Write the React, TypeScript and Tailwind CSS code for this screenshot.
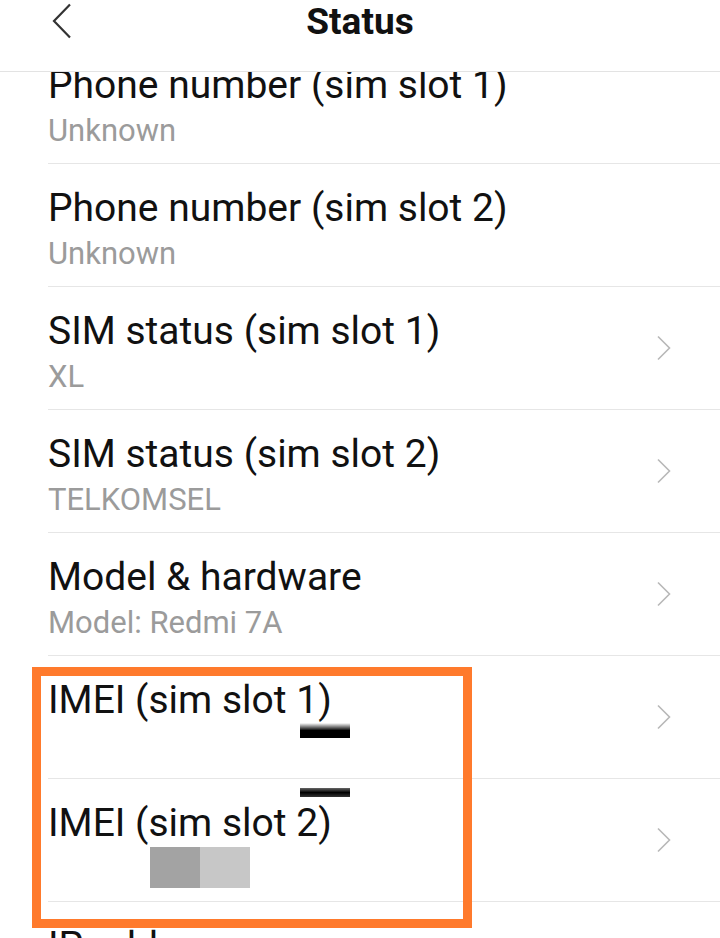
import React from 'react';

type Item = { title: string; value?: string; chevron?: boolean };

const ITEMS: Item[] = [
  { title: 'Phone number (sim slot 1)', value: 'Unknown' },
  { title: 'Phone number (sim slot 2)', value: 'Unknown' },
  { title: 'SIM status (sim slot 1)', value: 'XL', chevron: true },
  { title: 'SIM status (sim slot 2)', value: 'TELKOMSEL', chevron: true },
  { title: 'Model & hardware', value: 'Model: Redmi 7A', chevron: true },
  { title: 'IMEI (sim slot 1)', value: '', chevron: true },
  { title: 'IMEI (sim slot 2)', value: '', chevron: true },
  { title: 'IP address', value: '' },
];

function Chevron() {
  return (
    <svg width="16" height="26" viewBox="0 0 16 26" fill="none" className="shrink-0 self-center">
      <path d="M2 1.5 L13.5 13 L2 24.5" stroke="#b8b8b8" strokeWidth="1.6" />
    </svg>
  );
}

function Row({ item }: { item: Item }) {
  return (
    <div className="h-[123px] ml-[48px] border-b border-[#e6e6e6] flex items-start pr-[48px]">
      <div className="flex-1 pt-[21px]">
        <div className="text-[39px] leading-[46px] text-[#111]">{item.title}</div>
        <div className="mt-[3px] text-[31px] leading-[40px] text-[#9b9b9b] h-[40px]">{item.value}</div>
      </div>
      {item.chevron && <Chevron />}
    </div>
  );
}

export default function App() {
  return (
    <div className="relative w-[720px] h-[938px] overflow-hidden bg-white" style={{ fontFamily: 'Roboto, "Noto Sans", sans-serif' }}>
      {/* Header */}
      <div className="relative z-10 h-[72px] bg-white border-b border-[#e3e3e3] flex items-start justify-center">
        <svg width="22" height="36" viewBox="0 0 22 36" fill="none" className="absolute left-[51px] top-[3px]">
          <path d="M19 1.5 L3 18 L19 34.5" stroke="#333" strokeWidth="2.2" />
        </svg>
        <h1 className="text-[37px] leading-[44px] font-bold text-[#111]">Status</h1>
      </div>

      {/* List, scrolled slightly under the header */}
      <div className="-mt-[31px]">
        {ITEMS.map((it) => (
          <Row key={it.title} item={it} />
        ))}
      </div>

      {/* Redaction smudges */}
      <div className="absolute left-[300px] top-[723px] w-[50px] h-[15px] bg-gradient-to-b from-white/0 via-black to-black" />
      <div className="absolute left-[300px] top-[788px] w-[50px] h-[9px] bg-gradient-to-b from-black/60 via-black to-black/80" />
      <div className="absolute left-[150px] top-[847px] w-[50px] h-[41px] bg-[#a3a3a3]" />
      <div className="absolute left-[200px] top-[847px] w-[50px] h-[41px] bg-[#c7c7c7]" />

      {/* Annotation box */}
      <div className="absolute left-[32px] top-[667px] w-[440px] h-[261px] border-[9px] border-[#ff7a2c]" />
    </div>
  );
}
